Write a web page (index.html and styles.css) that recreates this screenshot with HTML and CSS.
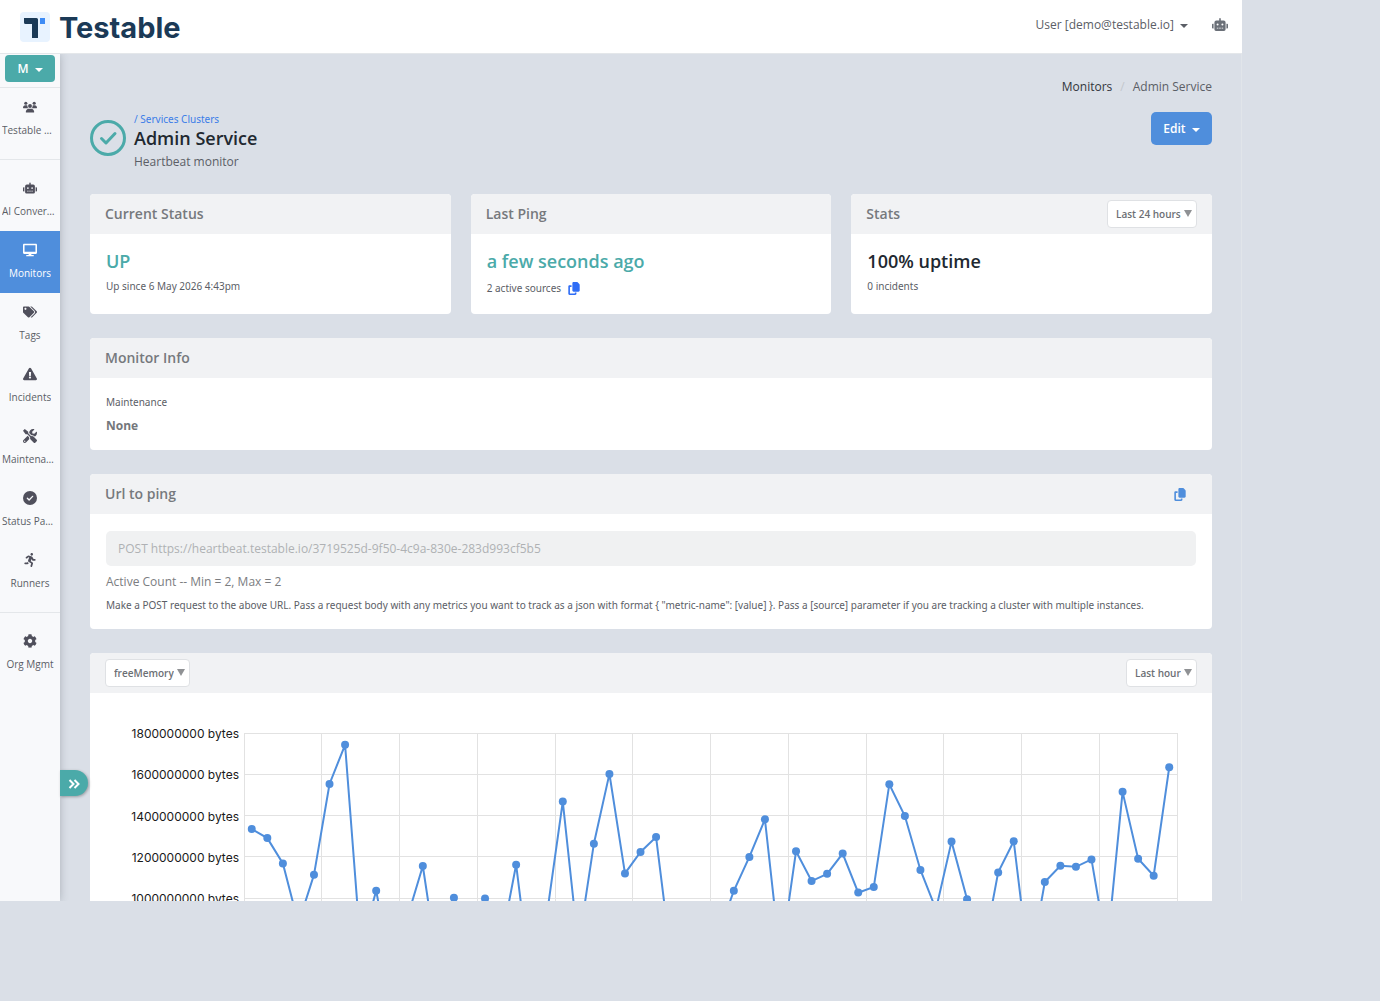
FILE: index.html
```html
<!DOCTYPE html>
<html lang="en">
<head>
  <meta charset="UTF-8">
  <meta name="viewport" content="width=device-width, initial-scale=1.0">
  <title>Admin Service - Testable</title>
  <link rel="stylesheet" href="styles.css">
</head>
<body>
  <!-- shared icons -->
  <svg class="sprite" aria-hidden="true">
    <symbol id="i-robot" viewBox="0 0 640 512"><path d="M32,224H64V416H32A32,32,0,0,1,0,384V256A32,32,0,0,1,32,224Zm512-48V448a64,64,0,0,1-64,64H160a64,64,0,0,1-64-64V176a80,80,0,0,1,80-80H288V32a32,32,0,0,1,64,0V96H464A80,80,0,0,1,544,176ZM264,256a40,40,0,1,0-40,40A40,40,0,0,0,264,256Zm-8,128H192v32h64Zm96,0H288v32h64ZM456,256a40,40,0,1,0-40,40A40,40,0,0,0,456,256Zm-8,128H384v32h64ZM640,256V384a32,32,0,0,1-32,32H576V224h32A32,32,0,0,1,640,256Z"/></symbol>
    <symbol id="i-copy" viewBox="0 0 448 512"><path d="M208 0H332.1c12.7 0 24.9 5.1 33.9 14.1l67.9 67.9c9 9 14.1 21.2 14.1 33.9V336c0 26.5-21.5 48-48 48H208c-26.5 0-48-21.5-48-48V48c0-26.5 21.5-48 48-48zM48 128h80v64H64V448H256V416h64v48c0 26.5-21.5 48-48 48H48c-26.5 0-48-21.5-48-48V176c0-26.5 21.5-48 48-48z"/></symbol>
  </svg>

  <div class="app">
    <header class="topbar">
      <a class="logo" href="#">
        <svg width="30" height="30" viewBox="0 0 30 30" aria-hidden="true">
          <rect width="30" height="30" rx="4" fill="#e8f3ff"/>
          <path d="M4 6h12.500q1.500 0 1.500 1.500V26h-6V12H5.500Q4 12 4 10.500z" fill="#1b3a57"/>
          <rect x="20" y="6" width="5" height="6" fill="#3d8bf5"/>
        </svg>
        <span>Testable</span>
      </a>
      <div class="topbar-right">
        <button class="user-menu">User [demo@testable.io]<i class="caret"></i></button>
        <button class="bot" aria-label="AI assistant"><svg><use href="#i-robot"/></svg></button>
      </div>
    </header>

    <div class="layout">
      <nav class="sidebar">
        <div class="org">
          <button class="org-btn">M<i class="caret"></i></button>
        </div>
        <a class="nav-item" href="#">
          <svg viewBox="0 0 640 512"><circle cx="128" cy="84" r="72"/><circle cx="512" cy="84" r="72"/><circle cx="320" cy="208" r="88"/><path d="M0 290c0-66 44-110 100-110h50c20 0 38 5 54 14-6 45 8 84 44 116H20c-11 0-20-9-20-20zM640 290c0-66-44-110-100-110h-50c-20 0-38 5-54 14 6 45-8 84-44 116h228c11 0 20-9 20-20zM128 480c0-80 60-142 136-142h112c76 0 136 62 136 142 0 18-12 32-30 32H158c-18 0-30-14-30-32z"/></svg>
          <span>Testable Demo</span>
        </a>
        <hr>
        <a class="nav-item" href="#">
          <svg><use href="#i-robot"/></svg>
          <span>AI Conversations</span>
        </a>
        <a class="nav-item active" href="#">
          <svg viewBox="0 0 576 512"><path d="M528 0H48C21.500 0 0 21.500 0 48v320c0 26.500 21.500 48 48 48h192l-16 48h-72c-13 0-24 11-24 24s11 24 24 24h272c13 0 24-11 24-24s-11-24-24-24h-72l-16-48h192c26.500 0 48-21.500 48-48V48c0-26.500-21.500-48-48-48zm-16 330H64V64h448v266z"/></svg>
          <span>Monitors</span>
        </a>
        <a class="nav-item" href="#">
          <svg viewBox="0 0 640 512"><path d="M497.941 225.941L286.059 14.059A48 48 0 0 0 252.118 0H48C21.490 0 0 21.490 0 48v204.118a48 48 0 0 0 14.059 33.941l211.882 211.882c18.744 18.745 49.136 18.746 67.882 0l204.118-204.118c18.745-18.745 18.745-49.137 0-67.882zM112 160c-26.510 0-48-21.490-48-48s21.490-48 48-48 48 21.490 48 48-21.490 48-48 48zm513.941 133.823L421.823 497.941c-18.745 18.745-49.137 18.745-67.882 0l-.36-.36L527.640 323.522c16.999-16.999 26.360-39.600 26.360-63.640s-9.362-46.641-26.360-63.640L331.397 0h48.721a48 48 0 0 1 33.941 14.059l211.882 211.882c18.745 18.745 18.745 49.137 0 67.882z"/></svg>
          <span>Tags</span>
        </a>
        <a class="nav-item" href="#">
          <svg viewBox="0 0 576 512"><path d="M569.517 440.013C587.975 472.007 564.806 512 527.940 512H48.054c-36.937 0-59.999-40.055-41.577-71.987L246.423 23.985c18.467-32.009 64.720-31.951 83.154 0l239.940 416.028zM288 354c-25.405 0-46 20.595-46 46s20.595 46 46 46 46-20.595 46-46-20.595-46-46-46zm-43.673-165.346l7.418 136c.347 6.364 5.609 11.346 11.982 11.346h48.546c6.373 0 11.635-4.982 11.982-11.346l7.418-136c.375-6.874-5.098-12.654-11.982-12.654h-63.383c-6.884 0-12.356 5.780-11.981 12.654z"/></svg>
          <span>Incidents</span>
        </a>
        <a class="nav-item" href="#">
          <svg viewBox="0 0 512 512"><path d="M501.100 395.700L384 278.600c-23.100-23.100-57.600-27.600-85.400-13.900L192 158.100V96L64 0 0 64l96 128h62.100l106.600 106.600c-13.600 27.800-9.200 62.300 13.900 85.400l117.100 117.100c14.600 14.600 38.200 14.600 52.700 0l52.700-52.700c14.500-14.600 14.500-38.200 0-52.700zM331.700 225c28.300 0 54.900 11 74.900 31l19.400 19.400c15.800-6.900 30.800-16.500 43.800-29.500 37.100-37.100 49.700-89.300 37.900-136.700-2.200-9-13.500-12.100-20.100-5.500l-74.400 74.400-67.900-11.300L334 98.900l74.400-74.400c6.600-6.600 3.400-17.900-5.700-20.200-47.400-11.700-99.600.9-136.600 37.900-28.500 28.500-41.900 66.100-41.200 103.600l82.100 82.100c8.100-1.900 16.500-2.900 24.700-2.900zm-103.900 82l-56.700-56.700L18.700 402.800c-25 25-25 65.500 0 90.500s65.500 25 90.500 0l123.600-123.600c-7.600-19.900-9.900-41.600-5-62.700zM64 472c-13.200 0-24-10.800-24-24 0-13.300 10.700-24 24-24s24 10.700 24 24c0 13.200-10.700 24-24 24z"/></svg>
          <span>Maintenance</span>
        </a>
        <a class="nav-item" href="#">
          <svg viewBox="0 0 512 512"><circle cx="256" cy="256" r="256"/><path d="M160 262l64 64 128-130" fill="none" stroke="#f8f9fb" stroke-width="50" stroke-linecap="round" stroke-linejoin="round"/></svg>
          <span>Status Pages</span>
        </a>
        <a class="nav-item" href="#">
          <svg viewBox="0 0 416 512"><path d="M272 96c26.510 0 48-21.490 48-48S298.510 0 272 0s-48 21.490-48 48 21.490 48 48 48zM113.690 317.470l-14.800 34.520H32c-17.670 0-32 14.330-32 32s14.330 32 32 32h77.450c19.250 0 36.580-11.440 44.110-29.090l8.790-20.520-10.670-6.300c-17.320-10.230-30.060-25.370-37.990-42.610zM384 223.990h-44.030l-26.060-53.250c-12.500-25.550-35.450-44.230-61.780-50.940l-71.080-21.140c-28.300-6.800-57.770-.55-80.840 17.140l-39.670 30.410c-14.030 10.750-16.690 30.830-5.920 44.860s30.840 16.660 44.860 5.920l39.690-30.410c7.670-5.890 17.440-8 25.270-6.140l14.700 4.370-37.460 87.390c-12.620 29.480-1.310 64.010 26.300 80.310l84.980 50.170-27.470 87.730c-5.280 16.860 4.110 34.820 20.970 40.090 3.190 1 6.410 1.480 9.580 1.480 13.610 0 26.230-8.770 30.520-22.450l31.640-101.060c5.910-20.770-2.890-43.080-21.640-54.390l-61.240-36.140 31.310-78.280 20.270 41.430c8 16.340 24.920 26.890 43.110 26.890H384c17.670 0 32-14.330 32-32s-14.330-31.990-32-31.990z"/></svg>
          <span>Runners</span>
        </a>
        <hr>
        <a class="nav-item" href="#">
          <svg viewBox="0 0 512 512"><path d="M487.400 315.700l-42.600-24.600c4.300-23.200 4.300-47 0-70.200l42.600-24.600c4.900-2.800 7.100-8.600 5.500-14-11.100-35.600-30-67.800-54.700-94.600-3.800-4.100-10-5.100-14.800-2.300L380.800 110c-17.900-15.400-38.500-27.300-60.800-35.100V25.800c0-5.600-3.900-10.500-9.400-11.700-36.700-8.200-74.300-7.800-109.200 0-5.500 1.200-9.400 6.100-9.400 11.700V75c-22.200 7.900-42.800 19.800-60.800 35.100L88.700 85.500c-4.900-2.800-11-1.900-14.800 2.300-24.700 26.700-43.600 58.900-54.700 94.600-1.700 5.400.6 11.200 5.500 14L67.300 221c-4.300 23.200-4.300 47 0 70.200l-42.600 24.600c-4.900 2.800-7.100 8.600-5.500 14 11.100 35.600 30 67.800 54.700 94.600 3.800 4.100 10 5.100 14.800 2.300l42.600-24.600c17.900 15.400 38.500 27.300 60.800 35.100v49.200c0 5.600 3.900 10.500 9.400 11.700 36.700 8.200 74.300 7.800 109.200 0 5.500-1.200 9.400-6.100 9.400-11.700v-49.200c22.200-7.900 42.800-19.800 60.800-35.100l42.600 24.600c4.900 2.800 11 1.900 14.800-2.300 24.700-26.700 43.600-58.900 54.700-94.600 1.500-5.500-.7-11.300-5.600-14.100zM256 336c-44.100 0-80-35.900-80-80s35.900-80 80-80 80 35.900 80 80-35.900 80-80 80z"/></svg>
          <span>Org Mgmt</span>
        </a>
        <button class="expand" aria-label="Expand menu">
          <svg width="12" height="10" viewBox="0 0 12 10"><path d="M1.500 1l4 4-4 4M6.500 1l4 4-4 4"/></svg>
        </button>
      </nav>

      <main class="content">
        <nav class="breadcrumb">
          <a href="#">Monitors</a><i>/</i><span>Admin Service</span>
        </nav>

        <div class="page-head">
          <svg class="status-icon" width="36" height="36" viewBox="0 0 36 36"><circle cx="18" cy="18" r="16.500" stroke-width="3"/><path d="M11.500 18.500l4.500 4.500 9-9.500" stroke-width="3"/></svg>
          <div class="page-title">
            <a href="#">/ Services Clusters</a>
            <h1>Admin Service</h1>
            <p>Heartbeat monitor</p>
          </div>
          <button class="edit-btn">Edit<i class="caret"></i></button>
        </div>

        <div class="row">
          <section class="card">
            <div class="card-head"><h2>Current Status</h2></div>
            <div class="card-body stat">
              <strong class="up">UP</strong>
              <p>Up since 6 May 2026 4:43pm</p>
            </div>
          </section>
          <section class="card">
            <div class="card-head"><h2>Last Ping</h2></div>
            <div class="card-body stat">
              <strong class="up">a few seconds ago</strong>
              <p>2 active sources <button class="copy" aria-label="Copy sources"><svg><use href="#i-copy"/></svg></button></p>
            </div>
          </section>
          <section class="card">
            <div class="card-head">
              <h2>Stats</h2>
              <span class="select"><select aria-label="Stats period"><option>Last 24 hours</option></select></span>
            </div>
            <div class="card-body stat">
              <strong>100% uptime</strong>
              <p>0 incidents</p>
            </div>
          </section>
        </div>

        <section class="card">
          <div class="card-head"><h2>Monitor Info</h2></div>
          <div class="card-body info">
            <p>Maintenance</p>
            <b>None</b>
          </div>
        </section>

        <section class="card">
          <div class="card-head">
            <h2><label for="pingUrl">Url to ping</label></h2>
            <button class="copy copy-url" aria-label="Copy url"><svg><use href="#i-copy"/></svg></button>
          </div>
          <div class="card-body ping">
            <input id="pingUrl" type="text" value="POST https://heartbeat.testable.io/3719525d-9f50-4c9a-830e-283d993cf5b5" disabled>
            <p class="count">Active Count -- Min = 2, Max = 2</p>
            <p>Make a POST request to the above URL. Pass a request body with any metrics you want to track as a json with format { "metric-name": [value] }. Pass a [source] parameter if you are tracking a cluster with multiple instances.</p>
          </div>
        </section>

        <section class="card">
          <div class="card-head">
            <span class="select"><select aria-label="Metric"><option>freeMemory</option></select></span>
            <span class="select"><select aria-label="Chart period"><option>Last hour</option></select></span>
          </div>
          <div class="chart" id="chart"></div>
        </section>
      </main>
    </div>
  </div>

  <script src="chart.js"></script>
</body>
</html>
```
FILE: styles.css
```css
:root {
  --bg: #dadfe7;
  --blue: #4f8edc;
  --teal: #4baaa9;
  --line: #e4e7ea;
  --text: #5b5e66;
  --dark: #212830;
  --small-font: "Noto Sans", "Open Sans", sans-serif;
}

* {
  box-sizing: border-box;
}

body {
  margin: 0;
  background: var(--bg);
  color: var(--text);
  font-family: "Open Sans", sans-serif;
  font-size: 12px;
  overflow: hidden;
}

button,
input,
select {
  font: inherit;
  color: inherit;
}

button {
  border: 0;
  padding: 0;
  background: none;
  cursor: pointer;
}

a {
  color: inherit;
  text-decoration: none;
}

h1,
h2,
p {
  margin: 0;
}

svg {
  fill: currentColor;
}

.sprite {
  display: none;
}

.app {
  width: 90%;
  height: 90vh;
  display: flex;
  flex-direction: column;
  overflow: hidden;
}

.caret {
  display: inline-block;
  margin-left: 6px;
  vertical-align: 1px;
  border: 4px solid transparent;
  border-top-color: currentColor;
  border-bottom: 0;
}

/* top bar */
.topbar {
  flex: none;
  height: 54px;
  padding: 0 14px 0 20px;
  display: flex;
  align-items: center;
  justify-content: space-between;
  background: #fff;
  border-bottom: 1px solid var(--line);
}

.logo {
  display: flex;
  align-items: center;
  gap: 9px;
  color: #1b3a57;
  font-family: Inter, sans-serif;
  font-size: 29px;
  font-weight: 700;
}

.logo span {
  padding-top: 2px;
}

.topbar-right {
  display: flex;
  align-items: center;
  gap: 24px;
  padding-bottom: 4px;
}

.bot svg {
  display: block;
  width: 16px;
  height: 13px;
  color: #6b7078;
}

/* sidebar */
.layout {
  flex: 1;
  min-height: 0;
  display: flex;
}

.sidebar {
  position: relative;
  z-index: 1;
  flex: none;
  width: 60px;
  background: #f8f9fb;
  box-shadow: 0 0 8px rgba(60, 70, 80, 0.3);
  clip-path: inset(0 -40px 0 0);
}

.org {
  height: 34px;
  padding: 1px 5px;
  border-bottom: 1px solid var(--line);
}

.org-btn {
  display: block;
  width: 100%;
  height: 27px;
  border-radius: 4px;
  background: var(--teal);
  color: #fff;
  font-weight: 600;
}

.sidebar hr {
  margin: 9px 0;
  border: 0;
  border-top: 1px solid var(--line);
}

.nav-item {
  display: flex;
  flex-direction: column;
  align-items: center;
  gap: 8px;
  height: 62px;
  padding: 12px 2px 0;
  font-size: 10px;
  line-height: 16px;
  text-align: center;
}

.nav-item svg {
  flex: none;
  width: 14px;
  height: 14px;
  color: #50505c;
}

.nav-item span {
  max-width: 100%;
  overflow: hidden;
  text-overflow: ellipsis;
  white-space: nowrap;
}

.nav-item.active,
.nav-item.active svg {
  background: var(--blue);
  color: #fff;
}

.expand {
  position: absolute;
  left: 100%;
  bottom: 105px;
  width: 28px;
  height: 26px;
  border-radius: 0 13px 13px 0;
  background: var(--teal);
  box-shadow: 1px 1px 3px rgba(0, 0, 0, 0.3);
}

.expand svg {
  fill: none;
  stroke: #fff;
  stroke-width: 2;
  vertical-align: middle;
}

/* content */
.content {
  flex: 1;
  min-width: 0;
  padding: 24px 29px 24px 30px;
  overflow: hidden;
  border-right: 1px solid #e1e5ea;
}

.breadcrumb {
  display: flex;
  justify-content: flex-end;
  gap: 8px;
  line-height: 18px;
}

.breadcrumb a {
  color: #33363c;
}

.breadcrumb i {
  color: #c3c7cd;
  font-style: normal;
}

.page-head {
  display: flex;
  align-items: flex-start;
  height: 82px;
  margin-top: 16px;
  gap: 8px;
}

.status-icon {
  flex: none;
  margin-top: 8px;
  fill: none;
  stroke: var(--teal);
  stroke-linecap: round;
  stroke-linejoin: round;
}

.page-title {
  flex: 1;
}

.page-title a {
  display: block;
  color: #3b7de8;
  font-family: var(--small-font);
  font-size: 10px;
  line-height: 14px;
}

.page-title h1 {
  color: var(--dark);
  font-size: 18px;
  font-weight: 600;
  line-height: 24px;
}

.page-title p {
  line-height: 24px;
}

.edit-btn {
  width: 61px;
  height: 33px;
  border-radius: 5px;
  background: var(--blue);
  color: #fff;
  font-weight: 600;
}

/* cards */
.row {
  display: flex;
  gap: 20px;
}

.row .card {
  flex: 1;
}

.card {
  margin-bottom: 24px;
  background: #fff;
  border-radius: 4px;
  overflow: hidden;
}

.card-head {
  display: flex;
  align-items: center;
  justify-content: space-between;
  height: 40px;
  padding: 0 15px;
  background: #f1f2f4;
}

.card-head h2 {
  color: #76797d;
  font-size: 14px;
  font-weight: 600;
  line-height: 18px;
}

.card-body {
  padding: 15px 16px;
}

.card-body p {
  font-family: var(--small-font);
  font-size: 10px;
}

.stat {
  height: 80px;
}

.stat strong {
  display: block;
  color: var(--dark);
  font-size: 18px;
  font-weight: 600;
  line-height: 24px;
}

.stat .up {
  color: var(--teal);
}

.stat p {
  display: flex;
  align-items: center;
  gap: 7px;
  margin-top: 6px;
  line-height: 15px;
}

.copy svg {
  display: block;
  width: 12px;
  height: 13px;
  color: #2f6df6;
}

.stat .copy {
  padding: 3px 0;
}

.copy-url {
  margin-right: 11px;
}

.copy-url svg {
  color: var(--blue);
}

.select {
  position: relative;
}

.select select {
  display: block;
  height: 28px;
  padding: 0 15px 0 8px;
  appearance: none;
  border: 1px solid #dfe1e4;
  border-radius: 4px;
  background: #fff;
  color: #6c6f74;
  font-size: 10px;
  font-weight: 600;
}

.select::after {
  content: "";
  position: absolute;
  top: 10px;
  right: 5px;
  border: 4px solid transparent;
  border-top: 7px solid #8f9194;
  border-bottom: 0;
  pointer-events: none;
}

.info p {
  line-height: 18px;
}

.info b {
  display: block;
  margin-top: 6px;
  color: #74777b;
  font-size: 12px;
  line-height: 18px;
}

.ping {
  padding-top: 17px;
}

.ping input {
  display: block;
  width: 100%;
  height: 35px;
  padding: 0 12px;
  border: 0;
  border-radius: 5px;
  background: #f0f1f2;
  color: #afb1b4;
  font-size: 12px;
}

.ping p {
  line-height: 18px;
}

.ping .count {
  margin: 7px 0 5px;
  color: #7b7d81;
  font-family: inherit;
  font-size: 12px;
}

.chart {
  height: 400px;
}

.chart svg {
  display: block;
  width: 100%;
  height: 100%;
}

.chart text {
  fill: #1a1a1a;
  font-family: Inter, sans-serif;
  font-size: 12px;
  text-anchor: end;
}

.chart .grid {
  stroke: #e2e2e2;
  shape-rendering: crispEdges;
}

.chart .line {
  fill: none;
  stroke: var(--blue);
  stroke-width: 2;
}

.chart circle {
  fill: var(--blue);
}
```
FILE: chart.js
```js
// free memory per minute, in millions of bytes
const values = [
  1335, 1291, 1168, 878, 1113, 1553, 1743, 763, 1036, 642,
  905, 1156, 656, 1002, 705, 998, 769, 1162, 560, 932,
  1468, 767, 1264, 1602, 1120, 1224, 1296, 690, 640, 610,
  825, 1036, 1200, 1382, 700, 1227, 1083, 1118, 1216, 1027,
  1054, 1552, 1398, 1137, 946, 1274, 995, 725, 1125, 1276,
  655, 1078, 1157, 1152, 1188, 750, 1515, 1191, 1109, 1634
];

const chart = document.getElementById("chart");
const left = 154;
const right = 35;
const top0 = 40;
const step = 41.3; // height of 200 million bytes

function y(v) {
  return top0 + (1800 - v) / 200 * step;
}

function draw() {
  const width = chart.clientWidth;
  const end = width - right;
  const slot = (end - left) / values.length;
  const bottom = y(400);
  let svg = "";

  for (let v = 1800; v >= 400; v -= 200) {
    svg += `<line class="grid" x1="${left}" x2="${end}" y1="${y(v)}" y2="${y(v)}"/>`;
    svg += `<text x="${left - 5}" y="${y(v) + 5}">${v}000000 bytes</text>`;
  }
  for (let i = 0; i <= values.length; i += 5) {
    const x = left + i * slot;
    svg += `<line class="grid" x1="${x}" x2="${x}" y1="${top0}" y2="${bottom}"/>`;
  }

  const points = values.map((v, i) => [left + (i + 0.5) * slot, y(v)]);
  svg += `<polyline class="line" points="${points.join(" ")}"/>`;
  points.forEach(([px, py]) => {
    svg += `<circle cx="${px}" cy="${py}" r="4"/>`;
  });

  chart.innerHTML = `<svg role="img" aria-label="freeMemory">${svg}</svg>`;
}

draw();
window.addEventListener("resize", draw);
```
